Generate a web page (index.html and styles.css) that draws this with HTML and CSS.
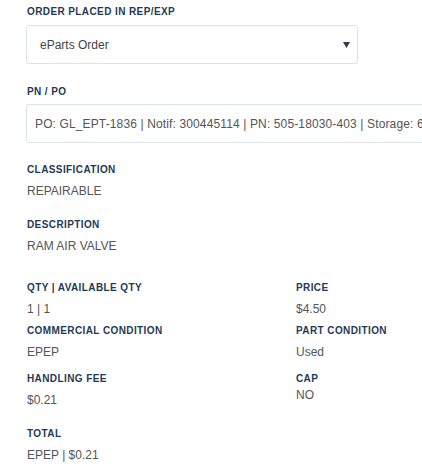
FILE: index.html
```html
<!DOCTYPE html>
<html>
<head>
<meta charset="utf-8">
<link rel="stylesheet" href="styles.css">
</head>
<body>
<div class="panel">
  <div class="label first">ORDER PLACED IN REP/EXP</div>
  <div class="select">
    <span class="select-text">eParts Order</span>
    <svg class="caret" width="7" height="6" viewBox="0 0 7 6"><path d="M0 0H7L3.5 6Z" fill="#2b3a4d"/></svg>
  </div>

  <div class="label pn">PN / PO</div>
  <div class="input">PO: GL_EPT-1836 | Notif: 300445114 | PN: 505-18030-403 | Storage: 6</div>

  <div class="label sec">CLASSIFICATION</div>
  <div class="value">REPAIRABLE</div>

  <div class="label sec desc">DESCRIPTION</div>
  <div class="value">RAM AIR VALVE</div>

  <div class="grid">
    <div class="cell">
      <div class="label">QTY | AVAILABLE QTY</div>
      <div class="value">1 | 1</div>
    </div>
    <div class="cell">
      <div class="label">PRICE</div>
      <div class="value">$4.50</div>
    </div>
    <div class="cell">
      <div class="label">COMMERCIAL CONDITION</div>
      <div class="value">EPEP</div>
    </div>
    <div class="cell">
      <div class="label">PART CONDITION</div>
      <div class="value">Used</div>
    </div>
    <div class="cell last-row">
      <div class="label">HANDLING FEE</div>
      <div class="value">$0.21</div>
    </div>
    <div class="cell last-row">
      <div class="label">CAP</div>
      <div class="value tight">NO</div>
    </div>
  </div>

  <div class="label total">TOTAL</div>
  <div class="value">EPEP | $0.21</div>
</div>
</body>
</html>
```

FILE: styles.css
```css
html, body {
  margin: 0;
  padding: 0;
  background: #ffffff;
  overflow: hidden;
}

body {
  font-family: "Liberation Sans", Arial, sans-serif;
  width: 422px;
  height: 472px;
}

.panel {
  padding: 5px 0 0 27px;
}

.label {
  font-size: 10px;
  font-weight: bold;
  letter-spacing: 0.4px;
  line-height: 14px;
  color: #1f3a57;
}

.value {
  font-size: 12px;
  line-height: 16px;
  color: #555555;
  margin-top: 6px;
}

.value.tight {
  margin-top: 1px;
}

.select {
  box-sizing: border-box;
  margin: 6px 0 0 -1px;
  width: 332px;
  height: 39px;
  border: 1px solid #dde1e8;
  border-radius: 3px;
  display: flex;
  align-items: center;
  justify-content: space-between;
  padding: 0 7px 0 13px;
}

.select-text {
  font-size: 12px;
  color: #444444;
}

.caret {
  display: block;
  margin-top: 1px;
}

.label.pn {
  margin-top: 21px;
}

.input {
  box-sizing: border-box;
  margin: 5px 0 0 -1px;
  width: 460px;
  height: 39px;
  border: 1px solid #dde1e8;
  border-radius: 3px;
  display: flex;
  align-items: center;
  padding: 0 0 0 8px;
  font-size: 12px;
  letter-spacing: 0.13px;
  color: #555555;
  white-space: nowrap;
  overflow: hidden;
}

.label.sec {
  margin-top: 20px;
}

.label.sec.desc {
  margin-top: 19px;
}

.grid {
  margin-top: 27px;
  display: grid;
  grid-template-columns: 269px 1fr;
  row-gap: 7px;
}

.cell.last-row {
  margin-top: 5px;
}

.label.total {
  margin-top: 19px;
}
```
